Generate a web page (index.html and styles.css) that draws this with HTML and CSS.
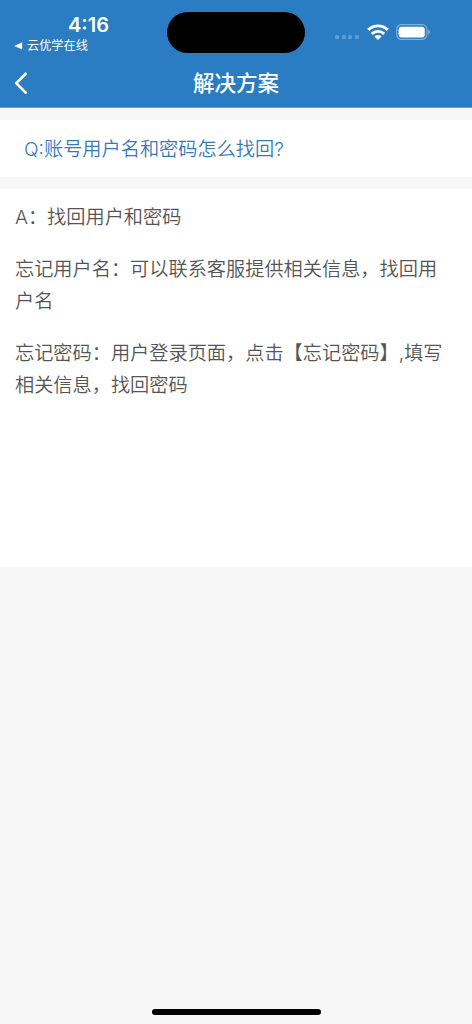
FILE: index.html
```html
<!DOCTYPE html>
<html lang="zh-CN">
<head>
    <meta charset="UTF-8">
    <meta name="viewport" content="width=device-width, initial-scale=1.0">
    <title>解决方案</title>
    <link rel="stylesheet" href="styles.css">
</head>
<body>

    <header class="header">
        <div class="status-bar">
            <div class="status-left">
                <div class="time">4:16</div>
                <div class="back-app">
                    <svg width="9" height="8" viewBox="0 0 9 8"><path d="M8.2 0.2v7.4L0.2 3.9z" fill="#fff"/></svg>
                    <span>云优学在线</span>
                </div>
            </div>
            <div class="island"></div>
            <div class="status-icons">
                <div class="signal"><i></i><i></i><i></i><i></i></div>
                <svg class="wifi" width="22" height="16" viewBox="0 0 22 16" fill="none" stroke="#fff" stroke-width="2.9">
                    <path d="M1.2 5.9a14 14 0 0 1 19.6 0"/>
                    <path d="M4.8 9.9a8.9 8.9 0 0 1 12.4 0"/>
                    <path d="M11 15.9L7.4 12.5a5.2 5.2 0 0 1 7.2 0z" fill="#fff" stroke="none"/>
                </svg>
                <svg class="battery" width="35" height="16" viewBox="0 0 35 16">
                    <rect x="0.7" y="0.7" width="30.2" height="14.6" rx="4.6" fill="none" stroke="#fff" stroke-opacity="0.4" stroke-width="1.2"/>
                    <rect x="2.6" y="2.8" width="26.2" height="10.6" rx="3" fill="#fff"/>
                    <path d="M32.4 5.5c1.8 0.5 1.8 4.5 0 5z" fill="#fff" fill-opacity="0.5"/>
                </svg>
            </div>
        </div>
        <div class="nav-bar">
            <a class="nav-back">
                <svg width="14" height="22" viewBox="0 0 14 22"><path d="M11.7 1.8L2.2 11.1l9.5 9.5" fill="none" stroke="#fff" stroke-width="2.7" stroke-linecap="round" stroke-linejoin="round"/></svg>
            </a>
            <h1>解决方案</h1>
        </div>
    </header>

    <section class="question">Q:账号用户名和密码怎么找回?</section>

    <section class="answer">
        <p>A：找回用户和密码</p>
        <p>忘记用户名：可以联系客服提供相关信息，找回用户名</p>
        <p>忘记密码：用户登录页面，点击【忘记密码】,填写相关信息，找回密码</p>
    </section>

    <div class="home-indicator"></div>

</body>
</html>
```
FILE: styles.css
```css
* {
    box-sizing: border-box;
}

body {
    margin: 0;
    height: 1024px;
    display: flex;
    flex-direction: column;
    background: #f7f7f7;
    font-family: Inter, "Noto Sans CJK SC", sans-serif;
    text-spacing-trim: space-all;
    overflow: hidden;
}

svg {
    display: block;
}

.header {
    height: 108px;
    background: #2a7cc3;
    border-bottom: 1px solid #659fcf;
    color: #fff;
}

.status-bar {
    height: 58px;
    display: grid;
    grid-template-columns: 167px 138px 1fr;
}

.status-left {
    padding-top: 13px;
}

.time {
    padding-left: 68px;
    font-size: 20px;
    font-weight: 600;
    line-height: 25px;
}

.back-app {
    display: flex;
    align-items: center;
    gap: 4px;
    padding-left: 14px;
    font-size: 12.2px;
    line-height: 16px;
}

.island {
    height: 41px;
    margin-top: 12px;
    border-radius: 21px;
    background: #000;
}

.status-icons {
    display: flex;
    align-items: flex-start;
    padding: 24px 0 0 30px;
}

.signal {
    display: flex;
    gap: 2.6px;
    padding-top: 11px;
}

.signal i {
    width: 4px;
    height: 4px;
    border-radius: 1.5px;
    background: rgba(255, 255, 255, 0.25);
}

.wifi {
    margin-left: 8px;
}

.battery {
    margin-left: 7px;
}

.nav-bar {
    height: 49px;
    display: grid;
    grid-template-columns: 60px 1fr 60px;
    align-items: center;
}

.nav-back {
    padding-left: 14px;
}

.nav-bar h1 {
    margin: 0;
    text-align: center;
    font-size: 21.5px;
    font-weight: 500;
    line-height: 30px;
}

.question {
    height: 57px;
    margin: 12px 0;
    padding: 1px 0 0 24px;
    background: #fff;
    color: #3779bd;
    font-size: 19.2px;
    font-weight: 350;
    line-height: 57px;
}

.answer {
    height: 378px;
    padding: 12px 20px 0 15px;
    background: #fff;
    color: #555;
    font-size: 19.2px;
    font-weight: 350;
    line-height: 32.2px;
}

.answer p {
    margin: 0 0 19.6px;
}

.home-indicator {
    width: 169px;
    height: 6px;
    margin: auto auto 9px;
    border-radius: 3px;
    background: #000;
}
```
